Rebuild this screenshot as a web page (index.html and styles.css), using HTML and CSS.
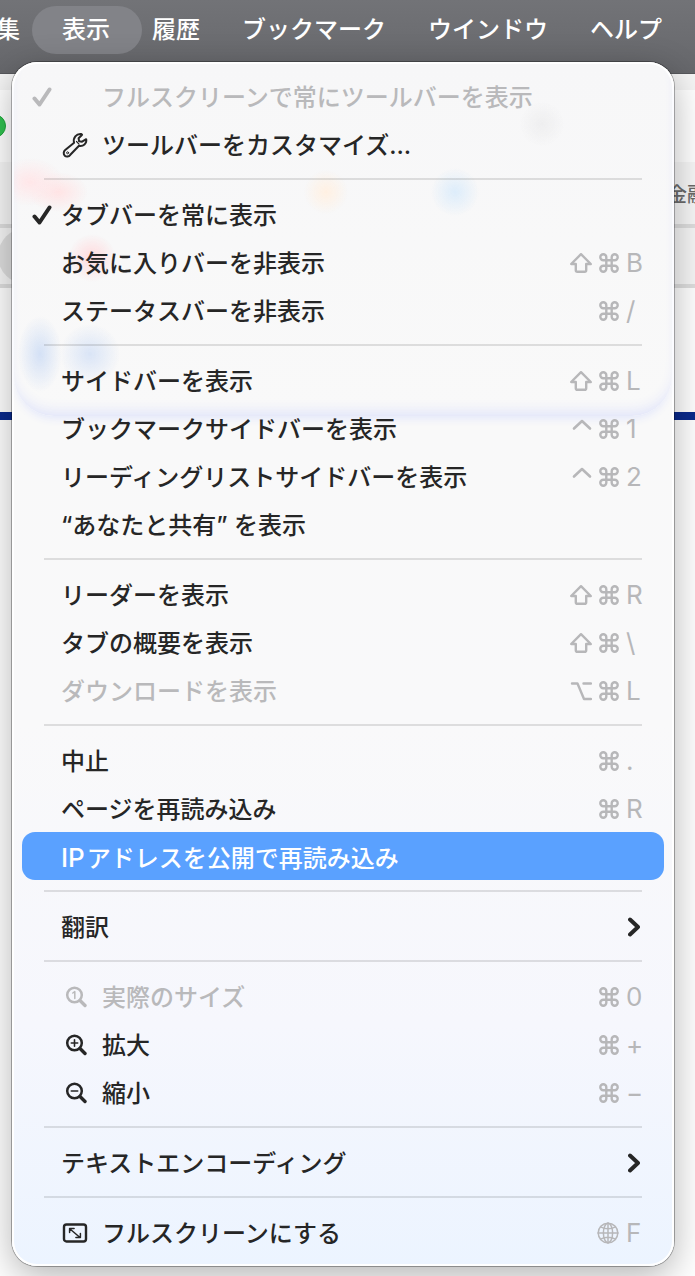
FILE: index.html
```html
<!DOCTYPE html>
<html lang="ja">
<head>
    <meta charset="UTF-8">
    <meta name="viewport" content="width=device-width, initial-scale=1.0">
    <title>表示</title>
    <link rel="stylesheet" href="styles.css">
</head>
<body>

<!-- shared icons -->
<svg class="icons" width="0" height="0" aria-hidden="true">
    <symbol id="cmd" viewBox="0 0 20 20">
        <path d="M7.300 7.300V4.300a3 3 0 1 0-3 3h11.400a3 3 0 1 0-3-3v11.400a3 3 0 1 0 3-3H4.300a3 3 0 1 0 3 3z"/>
    </symbol>
    <symbol id="shift" viewBox="0 0 22 20">
        <path d="M11 1.200 1.200 11h4.600v6.200q0 1.600 1.600 1.600h7.200q1.600 0 1.600-1.600V11h4.600z"/>
    </symbol>
    <symbol id="ctrl" viewBox="0 0 22 20">
        <path d="M4 9.500l8-7.500 8 7.500" stroke-width="2.600"/>
    </symbol>
    <symbol id="opt" viewBox="0 0 22 20">
        <path d="M2 2.500h5.500l6.500 15.500h7M13.500 2.500H21" stroke-width="2.400"/>
    </symbol>
    <symbol id="globe" viewBox="0 0 22 22">
        <g stroke-width="1.500">
            <circle cx="11" cy="11" r="9.800"/>
            <ellipse cx="11" cy="11" rx="4.600" ry="9.800"/>
            <path d="M11 1v20M1 11h20M3.500 4.800q7.500 4 15 0M3.500 17.200q7.500-4 15 0"/>
        </g>
    </symbol>
    <symbol id="check" viewBox="0 0 20 20">
        <path d="M2.500 11.500l5 6L17.500 2.500"/>
    </symbol>
    <symbol id="chevron" viewBox="0 0 12 20">
        <path d="M2 2.500l8 7.500-8 7.500"/>
    </symbol>
    <symbol id="lens" viewBox="0 0 22 22">
        <circle cx="9.500" cy="9" r="7.300"/>
        <path d="M15 14.500l5 5" stroke-width="3.400"/>
    </symbol>
</svg>

<nav class="menubar">
    <button type="button">編集</button>
    <button type="button" class="active" aria-expanded="true">表示</button>
    <button type="button">履歴</button>
    <button type="button">ブックマーク</button>
    <button type="button">ウインドウ</button>
    <button type="button">ヘルプ</button>
</nav>

<main class="window">
    <div class="toolbar"><span class="zoom_dot"></span></div>
    <div class="favorites"><span>金融</span></div>
    <div class="tabs"><span class="tab_btn"></span></div>
    <div class="banner"></div>
</main>

<div class="menu" role="menu">
    <div class="tint"></div>

    <button type="button" class="item" disabled>
        <span class="mark"><svg class="check"><use href="#check"/></svg></span>
        <span class="icon"></span>
        <span class="label">フルスクリーンで常にツールバーを表示</span>
    </button>
    <button type="button" class="item">
        <span class="mark"></span>
        <span class="icon">
            <svg class="wrench" viewBox="0 0 26 26">
                <path d="M24.200 7.200c.8 4.200-3 7.500-7.200 6.500L8.300 22.800c-1.500 1.900-4 2.300-5.500.9-1.600-1.500-1.400-4.100.4-5.600l8.900-7.400C10.700 5.800 14.300 1.400 19.300 2l.8.7-3.500 3.600.5 3 3 .4z"/>
                <circle cx="5.600" cy="20.800" r="1" stroke-width="1"/>
                <path d="M14.500 9.500l2.500 2.600" stroke-width="1.200"/>
            </svg>
        </span>
        <span class="label">ツールバーをカスタマイズ…</span>
    </button>
    <hr>
    <button type="button" class="item">
        <span class="mark"><svg class="check"><use href="#check"/></svg></span>
        <span class="label">タブバーを常に表示</span>
    </button>
    <button type="button" class="item">
        <span class="mark"></span>
        <span class="label">お気に入りバーを非表示</span>
        <kbd><svg class="shift"><use href="#shift"/></svg><svg class="cmd"><use href="#cmd"/></svg><span class="key">B</span></kbd>
    </button>
    <button type="button" class="item">
        <span class="mark"></span>
        <span class="label">ステータスバーを非表示</span>
        <kbd><svg class="cmd"><use href="#cmd"/></svg><span class="key">/</span></kbd>
    </button>
    <hr>
    <button type="button" class="item">
        <span class="mark"></span>
        <span class="label">サイドバーを表示</span>
        <kbd><svg class="shift"><use href="#shift"/></svg><svg class="cmd"><use href="#cmd"/></svg><span class="key">L</span></kbd>
    </button>
    <button type="button" class="item">
        <span class="mark"></span>
        <span class="label">ブックマークサイドバーを表示</span>
        <kbd><svg class="shift"><use href="#ctrl"/></svg><svg class="cmd"><use href="#cmd"/></svg><span class="key">1</span></kbd>
    </button>
    <button type="button" class="item">
        <span class="mark"></span>
        <span class="label">リーディングリストサイドバーを表示</span>
        <kbd><svg class="shift"><use href="#ctrl"/></svg><svg class="cmd"><use href="#cmd"/></svg><span class="key">2</span></kbd>
    </button>
    <button type="button" class="item">
        <span class="mark"></span>
        <span class="label">“あなたと共有” を表示</span>
    </button>
    <hr>
    <button type="button" class="item">
        <span class="mark"></span>
        <span class="label">リーダーを表示</span>
        <kbd><svg class="shift"><use href="#shift"/></svg><svg class="cmd"><use href="#cmd"/></svg><span class="key">R</span></kbd>
    </button>
    <button type="button" class="item">
        <span class="mark"></span>
        <span class="label">タブの概要を表示</span>
        <kbd><svg class="shift"><use href="#shift"/></svg><svg class="cmd"><use href="#cmd"/></svg><span class="key">\</span></kbd>
    </button>
    <button type="button" class="item" disabled>
        <span class="mark"></span>
        <span class="label">ダウンロードを表示</span>
        <kbd><svg class="shift"><use href="#opt"/></svg><svg class="cmd"><use href="#cmd"/></svg><span class="key">L</span></kbd>
    </button>
    <hr>
    <button type="button" class="item">
        <span class="mark"></span>
        <span class="label">中止</span>
        <kbd><svg class="cmd"><use href="#cmd"/></svg><span class="key">.</span></kbd>
    </button>
    <button type="button" class="item">
        <span class="mark"></span>
        <span class="label">ページを再読み込み</span>
        <kbd><svg class="cmd"><use href="#cmd"/></svg><span class="key">R</span></kbd>
    </button>
    <button type="button" class="item selected">
        <span class="mark"></span>
        <span class="label"><span class="latin">IP</span>アドレスを公開で再読み込み</span>
    </button>
    <hr>
    <button type="button" class="item">
        <span class="mark"></span>
        <span class="label">翻訳</span>
        <svg class="chevron"><use href="#chevron"/></svg>
    </button>
    <hr>
    <button type="button" class="item" disabled>
        <span class="mark"></span>
        <span class="icon">
            <svg class="lens" viewBox="0 0 22 22"><use href="#lens"/><path d="M7.800 7l2-1.400v7" stroke-width="1.500"/></svg>
        </span>
        <span class="label">実際のサイズ</span>
        <kbd><svg class="cmd"><use href="#cmd"/></svg><span class="key">0</span></kbd>
    </button>
    <button type="button" class="item">
        <span class="mark"></span>
        <span class="icon">
            <svg class="lens" viewBox="0 0 22 22"><use href="#lens"/><path d="M6.300 9h6.400M9.500 5.800v6.400" stroke-width="1.600"/></svg>
        </span>
        <span class="label">拡大</span>
        <kbd><svg class="cmd"><use href="#cmd"/></svg><span class="key">+</span></kbd>
    </button>
    <button type="button" class="item">
        <span class="mark"></span>
        <span class="icon">
            <svg class="lens" viewBox="0 0 22 22"><use href="#lens"/><path d="M6.300 9h6.400" stroke-width="1.600"/></svg>
        </span>
        <span class="label">縮小</span>
        <kbd><svg class="cmd"><use href="#cmd"/></svg><span class="key">−</span></kbd>
    </button>
    <hr>
    <button type="button" class="item">
        <span class="mark"></span>
        <span class="label">テキストエンコーディング</span>
        <svg class="chevron"><use href="#chevron"/></svg>
    </button>
    <hr>
    <button type="button" class="item">
        <span class="mark"></span>
        <span class="icon">
            <svg class="full" viewBox="0 0 26 20">
                <rect x="2" y="1.500" width="22" height="17" rx="2.500"/>
                <path d="M8 6l10 8.500M7.600 9.500V5.400h4.500M18.400 10.500v4.100h-4.500" stroke-width="1.500"/>
            </svg>
        </span>
        <span class="label">フルスクリーンにする</span>
        <kbd><svg class="globe"><use href="#globe"/></svg><span class="key">F</span></kbd>
    </button>
</div>

</body>
</html>
```
FILE: styles.css
```css
* {
    box-sizing: border-box;
}
body {
    margin: 0;
    min-height: 100vh;
    position: relative;
    overflow-x: hidden;
    background: #fff;
    font-family: Inter, "Noto Sans CJK JP", sans-serif;
    font-size: 24px;
}
button {
    border: none;
    background: none;
    color: inherit;
    font: inherit;
    white-space: nowrap;
}
svg {
    display: block;
    flex: none;
    fill: none;
    stroke: currentColor;
    stroke-width: 2;
    stroke-linecap: round;
    stroke-linejoin: round;
}
.icons {
    position: absolute;
}

/* menu bar */
.menubar {
    display: flex;
    align-items: flex-start;
    height: 74px;
    padding-top: 6px;
    margin-left: -49px;
    background: linear-gradient(#727377, #6a6b6f 70%, #66676b);
    border-bottom: 1px solid #57585c;
    color: #fff;
    font-weight: 500;
}
.menubar button {
    flex: none;
    height: 48px;
    padding: 0 21px;
    line-height: 46px;
}
.menubar .active {
    padding: 0 32px 0 30px;
    margin: 0 -11px 0 -9px;
    border-radius: 24px;
    background: #828388;
}

/* window behind the menu */
.toolbar {
    display: flex;
    align-items: center;
    height: 88px;
    background: linear-gradient(#f5f5f5 16px, #fff 16px);
}
.zoom_dot {
    width: 24px;
    height: 24px;
    margin-left: -18px;
    margin-top: 16px;
    border: 1px solid #1ea53a;
    border-radius: 50%;
    background: #2fc04f;
}
.favorites {
    display: flex;
    align-items: center;
    justify-content: flex-end;
    height: 66px;
    overflow: hidden;
    background: #f7f7f7;
    border-bottom: 4px solid #dedede;
    color: #6a6a6a;
    font-size: 20px;
    font-weight: 500;
}
.favorites span {
    margin-right: -12px;
}
.tabs {
    display: flex;
    align-items: center;
    height: 60px;
    background: #f6f6f6;
    border-bottom: 4px solid #dedede;
}
.tab_btn {
    width: 56px;
    height: 56px;
    margin-left: -2px;
    border-radius: 50%;
    background: #dedede;
}
.banner {
    height: 132px;
    border-bottom: 8px solid #0a2a8c;
}

/* drop-down menu */
.menu {
    position: absolute;
    top: 62px;
    left: 12px;
    right: 21px;
    padding: 10px;
    border-radius: 25px;
    background: linear-gradient(#f7f7f8, #f9f9f9 30%, #f9f9fa 55%, #f6f7fd 80%, #ecf4ff);
    box-shadow: inset 0 0 0 2px #fff, 0 0 0 1px rgba(0, 0, 0, 0.3), 0 10px 36px rgba(0, 0, 0, 0.3);
    color: #262626;
    font-weight: 500;
}
/* colours of the page showing through the glass */
.tint {
    position: absolute;
    top: 2px;
    left: 2px;
    right: 2px;
    height: 352px;
    border-radius: 24px 24px 40px 40px;
    background:
        radial-gradient(ellipse 34px 24px at 16px 118px, #ffe6e8, transparent),
        radial-gradient(ellipse 30px 20px at 44px 128px, #ffe3e4, transparent),
        radial-gradient(circle at 78px 194px, #ffd9dc, transparent 24px),
        radial-gradient(circle at 312px 128px, #fff0e2, transparent 22px),
        radial-gradient(circle at 441px 128px, #dcecfa, transparent 24px),
        radial-gradient(circle at 528px 60px, #eeeeef, transparent 22px),
        radial-gradient(ellipse 22px 38px at 26px 290px, #d3e0f5, transparent),
        radial-gradient(circle at 76px 290px, #d9e4f6, transparent 30px);
    box-shadow: inset 0 -10px 14px -6px #dfe3fa, 0 6px 10px -4px #e0e5fb;
}
.menu hr {
    position: relative;
    height: 2px;
    margin: 10px 22px;
    border: none;
    background: rgba(0, 0, 0, 0.11);
}
.item {
    position: relative;
    display: flex;
    align-items: center;
    width: 100%;
    height: 48px;
    padding: 2px 20px 0 10px;
    border-radius: 13px;
    text-align: left;
}
.item:disabled {
    color: #b9b9bb;
}
.selected {
    background: #5aa1ff;
    color: #fff;
}
.mark {
    flex: none;
    width: 29px;
}
.icon {
    display: flex;
    flex: none;
    justify-content: center;
    width: 28px;
    margin-right: 13px;
}
.label {
    flex: 1;
    padding-top: 2px;
    line-height: 44px;
}
.latin {
    margin-right: 2px;
    font-size: 26px;
}
kbd {
    display: flex;
    align-items: center;
    gap: 7px;
    color: #b7b7b9;
    font-family: Inter, sans-serif;
    font-size: 26px;
    font-weight: 400;
}
.key {
    width: 18px;
    line-height: 46px;
}
.check {
    width: 20px;
    height: 20px;
    stroke-width: 4;
}
.shift {
    width: 22px;
    height: 20px;
    stroke-width: 2.4;
}
.cmd {
    width: 20px;
    height: 20px;
    stroke-width: 2.4;
}
.globe {
    width: 22px;
    height: 22px;
}
.wrench {
    width: 26px;
    height: 26px;
}
.lens {
    width: 22px;
    height: 22px;
    margin-left: 2px;
    stroke-width: 2.5;
}
.full {
    width: 26px;
    height: 20px;
    stroke-width: 2.4;
}
.chevron {
    width: 12px;
    height: 20px;
    margin-right: 4px;
    stroke-width: 4;
}
```
